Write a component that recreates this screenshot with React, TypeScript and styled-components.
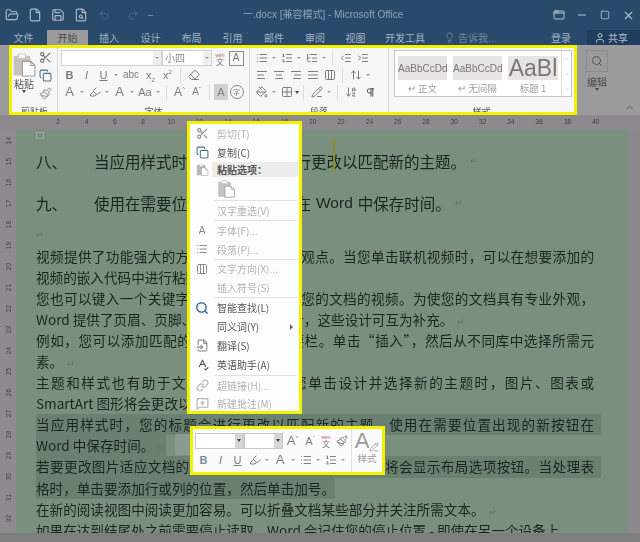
import React from "react";
import styled, { createGlobalStyle } from "styled-components";
import {
  AlignCenter, AlignJustify, AlignLeft, AlignRight, ArrowDownAZ, ArrowUpDown, ChevronDown, ChevronUp,
  Columns3, Copy, Eraser, File, FileInput, FileSearch, FolderOpen, Grid2x2, Highlighter, IndentDecrease, IndentIncrease,
  Lightbulb, Link, List, ListOrdered, ListTree, MessageSquarePlus, Minus, PaintBucket, Paintbrush, PencilLine,
  Pilcrow, Redo2, Save, Scissors, Search, Square, Undo2, User, X, AppWindow, SpellCheck,
} from "lucide-react";

const Global = createGlobalStyle`
  html, body { margin: 0; padding: 0; background: #7e7e7e; }
  body { width: 640px; height: 542px; overflow: hidden; font-family: "Noto Sans CJK SC", "Liberation Sans", sans-serif; }
  #root { width: 640px; height: 542px; }
`;

const Page = styled.div`
  position: relative; width: 640px; height: 542px; overflow: hidden; display: flex; flex-direction: column;
  filter: blur(0.35px);
`;

/* ---------- title bar ---------- */
const TitleBar = styled.header`
  height: 30px; background: #2a4a6c; display: flex; align-items: center; position: relative; color: #9fb0c2; flex: none;
`;
const Quick = styled.div<{ $x: number; $dim?: boolean }>`
  width: 23px; margin-left: ${(p) => p.$x}px; display: flex; justify-content: center; color: ${(p) => (p.$dim ? "#4f6c8a" : "#aab8c6")};
`;
const TitleText = styled.div`
  position: absolute; left: 243px; top: 7px; font-family: "Liberation Sans", "Noto Sans CJK SC", sans-serif; font-size: 10px; line-height: 16px; color: #8ea2b7; white-space: nowrap;
`;
const WindowButtons = styled.div`
  margin-left: auto; display: flex; align-items: center; gap: 9px; padding-right: 5px; color: #b4c0cc;
`;
const WindowButton = styled.span`
  width: 14px; height: 14px; display: flex; align-items: center; justify-content: center;
`;

/* ---------- tabs ---------- */
const TabBar = styled.nav`
  height: 15px; background: #2a4a6c; display: flex; font-size: 10px; line-height: 15px; color: #a3b2c2; flex: none;
`;
const Tab = styled.span<{ $w: number; $active?: boolean }>`
  width: ${(p) => p.$w}px; flex: none; text-align: center; height: 16px;
  ${(p) => (p.$active ? "background:#9b9b9b;color:#4a4a4a;" : "")}
`;
const TellMe = styled.span`
  margin-left: 10px; display: flex; align-items: center; gap: 3px; color: #6f879f;
`;
const Login = styled.span`
  margin-left: auto; width: 36px; color: #9fb0c2;
`;
const Share = styled.span`
  width: 53px; background: #1f3d5e; display: flex; align-items: center; gap: 2px; padding-left: 7px; box-sizing: border-box; color: #b5c2cf; height: 15px;
`;

/* ---------- ribbon ---------- */
const RibbonRow = styled.section`
  height: 70px; background: #9b9b9b; display: flex; flex: none; position: relative;
`;
const Ribbon = styled.div`
  margin-left: 9px; width: 568px; height: 70px; box-sizing: border-box; border: 3px solid #f2f200; background: #f6f6f6; display: flex; overflow: hidden; flex: none;
`;
const Group = styled.div<{ $w: number; $last?: boolean }>`
  width: ${(p) => p.$w}px; flex: none; box-sizing: border-box; position: relative; overflow: hidden;
  ${(p) => (p.$last ? "" : "border-right: 1px solid #d8d8d8;")}
`;
const GroupLabel = styled.div`
  position: absolute; left: 0; right: 0; top: 58px; text-align: center; font-size: 9px; line-height: 12px; color: #555;
`;
const Rows = styled.div<{ $gap?: number }>`
  display: flex; flex-direction: column; gap: ${(p) => p.$gap ?? 1}px; padding: 2px 0 0 3px;
`;
const ToolRow = styled.div`
  display: flex; align-items: center; height: 16px; color: #7c7c7c; font-size: 11px;
`;
const Tool = styled.span<{ $w?: number; $c?: string; $bg?: string }>`
  width: ${(p) => p.$w ?? 17}px; height: 16px; flex: none; display: flex; align-items: center; justify-content: center; line-height: 16px;
  color: ${(p) => p.$c ?? "#7c7c7c"}; ${(p) => (p.$bg ? `background:${p.$bg};` : "")}
`;
const Letter = styled.span<{ $size?: number; $b?: boolean; $i?: boolean; $u?: boolean }>`
  font-family: "Liberation Sans", sans-serif; font-size: ${(p) => p.$size ?? 11}px; line-height: 14px;
  font-weight: ${(p) => (p.$b ? 700 : 400)}; font-style: ${(p) => (p.$i ? "italic" : "normal")};
  text-decoration: ${(p) => (p.$u ? "underline" : "none")}; white-space: nowrap;
`;
const Sup = styled.sup`
  font-size: 6px; line-height: 0;
`;
const Sub = styled.sub`
  font-size: 6px; line-height: 0;
`;
const Caret = styled.span`
  width: 0; height: 0; border-left: 2px solid transparent; border-right: 2px solid transparent; border-top: 2px solid #9a9a9a; flex: none; margin: 0 2px;
`;
const DarkCaret = styled(Caret)`
  border-top-color: #444; border-left-width: 2.5px; border-right-width: 2.5px; border-top-width: 3px; margin: 0;
`;
const VSep = styled.span`
  width: 1px; height: 15px; background: #dcdcdc; margin: 0 4px; flex: none;
`;
const Select = styled.div<{ $w: number; $box?: string }>`
  width: ${(p) => p.$w}px; height: 16px; box-sizing: border-box; background: #fff; border: 1px solid ${(p) => p.$box ?? "#d2d2d2"}; display: flex; flex: none; font-size: 10px; color: #8a8a8a; line-height: 14px;
`;
const SelectValue = styled.span`
  flex: 1; padding-left: 2px;
`;
const SelectBtn = styled.span<{ $bg?: string }>`
  width: 8px; background: ${(p) => p.$bg ?? "#eeeeee"}; display: flex; align-items: center; justify-content: center;
`;
const BoxA = styled.span`
  width: 13px; height: 13px; border: 1px solid #8d8d8d; display: flex; align-items: center; justify-content: center; font-family: "Liberation Sans", sans-serif; font-size: 10px; color: #777;
`;
const Wen = styled.span`
  display: flex; flex-direction: column; align-items: center; font-size: 8px; line-height: 7px; color: #777;
`;
const WenTop = styled.span`
  font-size: 5px; line-height: 6px; color: #b06a5a; font-family: "Liberation Sans", sans-serif;
`;
const Circled = styled.span`
  width: 12px; height: 12px; border: 1px solid #888; border-radius: 50%; font-size: 7px; line-height: 12px; text-align: center; color: #777;
`;

const ClipBody = styled.div`
  display: flex; height: 58px;
`;
const PasteCol = styled.div`
  width: 24px; display: flex; flex-direction: column; align-items: center; font-size: 10px; line-height: 12px; padding-top: 2px; color: #555;
`;
const PasteIcon = styled.span`
  height: 28px; display: flex; align-items: center;
`;
const ClipTools = styled.div`
  display: flex; flex-direction: column; align-items: center; gap: 5px; padding-top: 3px; width: 18px; color: #6c6c6c;
`;

const StyleBox = styled.div`
  margin: 2px 0 0 5px; width: 178px; height: 47px; display: flex; box-sizing: border-box; border: 1px solid #c6c6c6; background: #fff;
`;
const Cards = styled.div`
  flex: 1; display: flex; gap: 6px; padding: 5px 0 0 3px;
`;
const Card = styled.div<{ $w: number }>`
  width: ${(p) => p.$w}px; display: flex; flex-direction: column; align-items: center;
`;
const Swatch = styled.div<{ $large?: boolean }>`
  width: 100%; height: 25px; background: #e6e3e3; overflow: hidden; white-space: nowrap; text-align: center;
  font-family: "Liberation Sans", sans-serif; color: #777; font-size: ${(p) => (p.$large ? 23 : 10)}px; line-height: 25px;
`;
const CardLabel = styled.div`
  font-size: 9.5px; line-height: 15px; color: #9c9c9c; margin-top: 1px;
`;
const Scrolls = styled.div`
  width: 9px; border-left: 1px solid #dcdcdc; display: flex; flex-direction: column; justify-content: space-around; align-items: center; color: #aaa;
`;

const EditGroup = styled.div`
  width: 30px; margin-left: 5px; display: flex; flex-direction: column; align-items: center; padding-top: 5px; font-size: 10px; line-height: 12px; color: #4a4a4a;
`;
const EditIcon = styled.span`
  width: 22px; height: 22px; box-sizing: border-box; border: 1px solid #8c8c8c; display: flex; align-items: center; justify-content: center; color: #555; margin-bottom: 4px;
`;
const Collapse = styled.span`
  position: absolute; right: 5px; bottom: 2px; color: #555; display: flex;
`;

/* ---------- ruler ---------- */
const HRuler = styled.div`
  height: 15px; background: #8d8a8e; display: flex; padding-left: 44px; font-family: "Liberation Sans", sans-serif; font-size: 6.5px; line-height: 13px; color: #3f3f3f; flex: none;
`;
const Mark = styled.span`
  width: 28.3px; flex: none; text-align: center;
`;

/* ---------- workspace ---------- */
const Workspace = styled.main`
  flex: none; height: 403px; display: flex;
`;
const VRuler = styled.div`
  width: 16px; flex: none; background: #8d8b8f; display: flex; flex-direction: column; overflow: hidden;
`;
const VMark = styled.span`
  height: 21px; flex: none; display: flex; align-items: center; justify-content: center; font-family: "Liberation Sans", sans-serif; font-size: 6.5px; color: #3f3f3f; transform: rotate(-90deg);
`;
const Doc = styled.article`
  flex: 1; background: #79907f; padding: 20px 0 0 20px; overflow: hidden; color: #1a2520; position: relative;
`;
const Scrollbar = styled.div`
  width: 12px; flex: none; background: #8b898c;
`;
const Bottom = styled.div`
  flex: 1; background: #7e7e7e;
`;
const Heading = styled.div`
  display: flex; font-size: 15.5px; line-height: 22px; height: 22px; margin-bottom: 20px; white-space: nowrap;
`;
const HeadNo = styled.span`
  width: 58px; flex: none;
`;
const Latin = styled.span`
  font-family: "Liberation Sans", sans-serif; margin: 0 5px;
`;
const ParaMark = styled.span`
  color: #5f7468; font-size: 9px; margin-left: 4px;
`;
const EmptyPara = styled.div`
  height: 21.5px; line-height: 21px; margin-top: -10px; color: #5f7468; font-size: 9px;
`;
const Line = styled.div<{ $fill?: boolean; $sel?: boolean }>`
  font-size: 13.6px; line-height: 21.1px; height: 21.1px; white-space: nowrap;
  width: ${(p) => (p.$fill ? "558px" : "fit-content")};
  ${(p) => (p.$fill ? "text-align: justify; text-align-last: justify; white-space: normal;" : "")}
  ${(p) => (p.$sel ? "background: #6a8172;" : "")}
  ${(p) => (p.$sel && p.$fill ? "box-shadow: 7px 0 0 #6a8172;" : "")}
`;
const MarginMark = styled.span`
  position: absolute; left: 20px; top: 2px; width: 6px; height: 5px; border: 1px solid #a0a8a2;
`;
const Ghost = styled.span`
  position: absolute; left: 159px; top: 304px; width: 15px; height: 21px; background: #8a9c8f;
`;
const IBeam = styled.div`
  position: absolute; left: 331px; top: 140px; width: 5px; height: 32px; color: #8f8a2a;
  border-top: 1px solid currentColor; border-bottom: 1px solid currentColor; box-sizing: border-box;
  &::before { content: ""; display: block; width: 2px; height: 100%; margin: 0 auto; background: currentColor; }
`;

/* ---------- context menu ---------- */
const Menu = styled.aside`
  position: absolute; left: 187px; top: 121px; width: 115px; height: 293px; box-sizing: border-box; border: 3px solid #f2f200; background: #fdfdfd;
`;
const MenuRow = styled.div<{ $off?: boolean; $h?: number }>`
  height: ${(p) => p.$h ?? 18.5}px; display: flex; align-items: center; font-size: 10px; color: ${(p) => (p.$off ? "#b2b2b2" : "#555")}; white-space: nowrap; position: relative;
`;
const MenuIcon = styled.span<{ $c?: string }>`
  width: 24px; margin-right: 3px; flex: none; display: flex; justify-content: center; color: ${(p) => p.$c ?? "#8a8a8a"};
`;
const MenuHeadRow = styled.div`
  display: flex; align-items: center; height: 15px;
`;
const MenuHead = styled.div`
  flex: 1; height: 15px; line-height: 15px; background: #ececec; font-size: 10px; font-weight: 700; color: #555; padding-left: 5px; margin: 0 1px 0 -5px;
`;
const PasteRow = styled.div`
  margin-left: 27px; height: 23px; display: flex; align-items: center;
`;
const MenuSep = styled.div`
  height: 1px; background: #e2e2e2; margin: 0 2px 0 24px;
`;
const SubArrow = styled.span`
  position: absolute; right: 6px; top: 6px; width: 0; height: 0; border-top: 3px solid transparent; border-bottom: 3px solid transparent; border-left: 3px solid #666;
`;

/* ---------- mini toolbar ---------- */
const Mini = styled.aside`
  position: absolute; left: 190px; top: 426px; width: 195px; height: 49px; box-sizing: border-box; border: 3px solid #f2f200; background: #fbfbfb; display: flex;
`;
const MiniMain = styled.div`
  flex: none; width: 158px; display: flex; flex-direction: column; padding: 3px 0 0 2px; box-sizing: border-box; gap: 3px;
`;
const MiniRowTop = styled.div`
  display: flex; align-items: center; height: 17px; color: #8a8a8a;
`;
const MiniRowBottom = styled.div`
  display: flex; align-items: center; height: 16px; color: #8a8a8a;
`;
const MiniStyle = styled.div`
  flex: 1; border-left: 1px solid #e0e0e0; display: flex; flex-direction: column; align-items: center; font-size: 9.5px; color: #9a9a9a; line-height: 12px;
`;
const BigA = styled.span`
  font-family: "Liberation Sans", sans-serif; font-size: 22px; line-height: 23px; color: #9a9a9a; display: flex; align-items: flex-end;
`;

const rulerMarks = ["2", "4", "6", "8", "10", "12", "14", "16", "18", "20", "22", "24", "26", "28", "30", "32", "34", "36", "38", "40"];
const vMarks = Array.from({ length: 20 }, (_, i) => String(i + 14));
const tabs: [string, number][] = [["插入", 42], ["设计", 41], ["布局", 41], ["引用", 41], ["邮件", 42], ["审阅", 40], ["视图", 41]];

function Par() { return <ParaMark>↵</ParaMark>; }

function PasteGlyph({ size, color }: { size: number; color: string }) {
  return (
    <svg width={size} height={size} viewBox="0 0 24 24" fill="none">
      <rect x="2" y="4" width="15" height="18" rx="1" fill={color} stroke={color} />
      <rect x="6" y="2" width="7" height="4" rx="1" fill="#fff" stroke={color} />
      <path d="M10 9h8l4 4v10H10z" fill="#fff" stroke="#9a9a9a" />
      <path d="M18 9v4h4" stroke="#9a9a9a" />
    </svg>
  );
}

export default function App() {
  return (
    <Page>
      <Global />
      <TitleBar>
        <Quick $x={0}><FolderOpen size={14} /></Quick>
        <Quick $x={0}><File size={14} /></Quick>
        <Quick $x={0}><Save size={14} /></Quick>
        <Quick $x={0}><FileSearch size={14} /></Quick>
        <Quick $x={0} $dim><Undo2 size={12} /></Quick>
        <Quick $x={6} $dim><Redo2 size={12} /></Quick>
        <Quick $x={-5}><Minus size={7} /></Quick>
        <TitleText>一.docx [兼容模式] - Microsoft Office</TitleText>
        <WindowButtons>
          <WindowButton><AppWindow size={12} /></WindowButton>
          <WindowButton><Minus size={12} /></WindowButton>
          <WindowButton><Square size={10} /></WindowButton>
          <WindowButton><X size={13} /></WindowButton>
        </WindowButtons>
      </TitleBar>
      <TabBar>
        <Tab $w={47}>文件</Tab>
        <Tab $w={41} $active>开始</Tab>
        {tabs.map(([t, w]) => <Tab key={t} $w={w}>{t}</Tab>)}
        <Tab $w={58}>开发工具</Tab>
        <TellMe><Lightbulb size={11} />告诉我...</TellMe>
        <Login>登录</Login>
        <Share><User size={12} />共享</Share>
      </TabBar>

      <RibbonRow>
        <Ribbon>
          <Group $w={46}>
            <ClipBody>
              <PasteCol>
                <PasteIcon><PasteGlyph size={25} color="#c9c2b8" /></PasteIcon>
                粘贴
                <DarkCaret />
              </PasteCol>
              <ClipTools>
                <Scissors size={13} />
                <Copy size={13} color="#50708f" />
                <Paintbrush size={13} color="#a9a9a9" />
              </ClipTools>
            </ClipBody>
            <GroupLabel>剪贴板</GroupLabel>
          </Group>
          <Group $w={192}>
            <Rows $gap={1}>
              <ToolRow>
                <Select $w={101}><SelectValue /><SelectBtn><Caret /></SelectBtn></Select>
                <Select $w={50}><SelectValue>小四</SelectValue><SelectBtn><Caret /></SelectBtn></Select>
                <Tool $w={16}><Wen><WenTop>wén</WenTop>文</Wen></Tool>
                <Tool $w={16}><BoxA>A</BoxA></Tool>
              </ToolRow>
              <ToolRow>
                <Tool><Letter $b>B</Letter></Tool>
                <Tool><Letter $i>I</Letter></Tool>
                <Tool><Letter $u>U</Letter></Tool>
                <Caret />
                <Tool $w={22}><Letter $size={10}>abc</Letter></Tool>
                <Tool><Letter>x<Sub>2</Sub></Letter></Tool>
                <Tool><Letter>x<Sup>2</Sup></Letter></Tool>
                <VSep />
                <Tool><Eraser size={12} /></Tool>
              </ToolRow>
              <ToolRow>
                <Tool><Letter $size={13}>A</Letter></Tool>
                <Caret />
                <Tool><Highlighter size={12} /></Tool>
                <Caret />
                <Tool><Letter $size={13}>A</Letter></Tool>
                <Caret />
                <Tool $w={18}><Letter>Aa</Letter></Tool>
                <Caret />
                <VSep />
                <Tool><Letter $size={12}>A<Sup>^</Sup></Letter></Tool>
                <Tool><Letter $size={10}>A<Sup>ˇ</Sup></Letter></Tool>
                <VSep />
                <Tool $w={14} $bg="#cfcfcf"><Letter>A</Letter></Tool>
                <Tool $w={17}><Circled>字</Circled></Tool>
              </ToolRow>
            </Rows>
            <GroupLabel>字体</GroupLabel>
          </Group>
          <Group $w={139}>
            <Rows $gap={1}>
              <ToolRow>
                <Tool><List size={12} /></Tool><Caret />
                <Tool><ListOrdered size={12} /></Tool><Caret />
                <Tool><ListTree size={12} /></Tool><Caret />
                <VSep />
                <Tool><IndentDecrease size={12} /></Tool>
                <Tool><IndentIncrease size={12} /></Tool>
              </ToolRow>
              <ToolRow>
                <Tool><AlignLeft size={12} /></Tool>
                <Tool><AlignCenter size={12} /></Tool>
                <Tool><AlignRight size={12} /></Tool>
                <Tool><AlignJustify size={12} /></Tool>
                <Tool><Columns3 size={12} /></Tool>
                <VSep />
                <Tool><ArrowUpDown size={12} /></Tool><Caret />
              </ToolRow>
              <ToolRow>
                <Tool><PaintBucket size={12} /></Tool><Caret />
                <Tool><Grid2x2 size={12} /></Tool><DarkCaret />
                <VSep />
                <Tool><PencilLine size={12} /></Tool><Caret />
                <VSep />
                <Tool><ArrowDownAZ size={12} /></Tool>
                <Tool $w={22} $c="#444"><Pilcrow size={11} /></Tool>
              </ToolRow>
            </Rows>
            <GroupLabel>段落</GroupLabel>
          </Group>
          <Group $w={185} $last>
            <StyleBox>
              <Cards>
                <Card $w={49}><Swatch>AaBbCcDd</Swatch><CardLabel>↵ 正文</CardLabel></Card>
                <Card $w={49}><Swatch>AaBbCcDd</Swatch><CardLabel>↵ 无间隔</CardLabel></Card>
                <Card $w={50}><Swatch $large>AaBl</Swatch><CardLabel>标题 1</CardLabel></Card>
              </Cards>
              <Scrolls><ChevronUp size={6} /><ChevronDown size={6} /><ChevronDown size={6} /></Scrolls>
            </StyleBox>
            <GroupLabel>样式</GroupLabel>
          </Group>
        </Ribbon>
        <EditGroup>
          <EditIcon><Search size={12} /></EditIcon>
          编辑
          <DarkCaret />
        </EditGroup>
        <Collapse><ChevronUp size={11} /></Collapse>
      </RibbonRow>

      <HRuler>{rulerMarks.map((m) => <Mark key={m}>{m}</Mark>)}</HRuler>

      <Workspace>
        <VRuler>{vMarks.map((m) => <VMark key={m}>{m}</VMark>)}</VRuler>
        <Doc>
          <MarginMark />
          <Heading><HeadNo>八、</HeadNo>当应用样式时，您的标题会进行更改以匹配新的主题。<Par /></Heading>
          <Heading><HeadNo>九、</HeadNo>使用在需要位置出现的新按钮在<Latin>Word</Latin>中保存时间。<Par /></Heading>
          <EmptyPara>↵</EmptyPara>
          <Line $fill>视频提供了功能强大的方法帮助您证明您的观点。当您单击联机视频时，可以在想要添加的</Line>
          <Line>视频的嵌入代码中进行粘贴。<Par /></Line>
          <Line $fill>您也可以键入一个关键字以联机搜索最适合您的文档的视频。为使您的文档具有专业外观，</Line>
          <Line>Word 提供了页眉、页脚、封面和文本框设计，这些设计可互为补充。<Par /></Line>
          <Line $fill>例如，您可以添加匹配的封面、页眉和提要栏。单击“插入”，然后从不同库中选择所需元</Line>
          <Line>素。<Par /></Line>
          <Line $fill>主题和样式也有助于文档保持协调。当您单击设计并选择新的主题时，图片、图表或</Line>
          <Line>SmartArt 图形将会更改以匹配新的主题。<Par /></Line>
          <Line $fill $sel>当应用样式时，您的标题会进行更改以匹配新的主题。使用在需要位置出现的新按钮在</Line>
          <Line $sel>Word 中保存时间。<Par /></Line>
          <Line $fill $sel>若要更改图片适应文档的方式，请单击该图片，图片旁边将会显示布局选项按钮。当处理表</Line>
          <Line $sel>格时，单击要添加行或列的位置，然后单击加号。</Line>
          <Line>在新的阅读视图中阅读更加容易。可以折叠文档某些部分并关注所需文本。<Par /></Line>
          <Line>如果在达到结尾处之前需要停止读取，Word 会记住您的停止位置 - 即使在另一个设备上。</Line>
          <Ghost />
        </Doc>
        <Scrollbar />
      </Workspace>
      <Bottom />

      <IBeam />

      <Menu>
        <MenuRow $off $h={19}><MenuIcon><Scissors size={13} /></MenuIcon>剪切(T)</MenuRow>
        <MenuRow $h={19}><MenuIcon $c="#50708f"><Copy size={13} /></MenuIcon>复制(C)</MenuRow>
        <MenuHeadRow>
          <MenuIcon $c="#a0a0a0"><PasteGlyph size={13} color="#b8b8b8" /></MenuIcon>
          <MenuHead>粘贴选项：</MenuHead>
        </MenuHeadRow>
        <PasteRow><PasteGlyph size={19} color="#c4c4c4" /></PasteRow>
        <MenuSep />
        <MenuRow $off $h={19}><MenuIcon />汉字重选(V)</MenuRow>
        <MenuSep />
        <MenuRow $off $h={19}><MenuIcon><Letter $size={10}>A</Letter></MenuIcon>字体(F)...</MenuRow>
        <MenuRow $off><MenuIcon><List size={12} /></MenuIcon>段落(P)...</MenuRow>
        <MenuSep />
        <MenuRow $off><MenuIcon><Columns3 size={12} /></MenuIcon>文字方向(X)...</MenuRow>
        <MenuRow $off><MenuIcon />插入符号(S)</MenuRow>
        <MenuSep />
        <MenuRow $h={20}><MenuIcon $c="#2f6aa8"><Search size={14} strokeWidth={2.4} /></MenuIcon>智能查找(L)</MenuRow>
        <MenuRow $h={18}><MenuIcon />同义词(Y)<SubArrow /></MenuRow>
        <MenuRow $h={19}><MenuIcon><FileInput size={13} /></MenuIcon>翻译(S)</MenuRow>
        <MenuRow $h={20}><MenuIcon $c="#555"><SpellCheck size={13} /></MenuIcon>英语助手(A)</MenuRow>
        <MenuSep />
        <MenuRow $off $h={19}><MenuIcon $c="#b0b0b0"><Link size={13} /></MenuIcon>超链接(H)...</MenuRow>
        <MenuRow $off $h={18}><MenuIcon $c="#b0b0b0"><MessageSquarePlus size={13} /></MenuIcon>新建批注(M)</MenuRow>
      </Menu>

      <Mini>
        <MiniMain>
          <MiniRowTop>
            <Select $w={49} $box="#c8c8c8"><SelectValue /><SelectBtn $bg="#d6d6d6"><DarkCaret /></SelectBtn></Select>
            <Select $w={39} $box="#c8c8c8"><SelectValue /><SelectBtn $bg="#d6d6d6"><DarkCaret /></SelectBtn></Select>
            <Tool $w={19}><Letter $size={13}>A<Sup>^</Sup></Letter></Tool>
            <Tool $w={16}><Letter $size={11}>A<Sup>ˇ</Sup></Letter></Tool>
            <Tool $w={16}><Wen><WenTop>wén</WenTop>文</Wen></Tool>
            <Tool $w={15}><Paintbrush size={12} /></Tool>
          </MiniRowTop>
          <MiniRowBottom>
            <Tool $c="#7c8ca0"><Letter $b>B</Letter></Tool>
            <Tool><Letter $i>I</Letter></Tool>
            <Tool><Letter $u>U</Letter></Tool>
            <Tool><Highlighter size={12} /></Tool>
            <Caret />
            <Tool $w={18}><Letter $size={13}>A</Letter></Tool>
            <Caret />
            <Tool><List size={12} /></Tool>
            <Caret />
            <Tool><ListOrdered size={12} /></Tool>
            <Caret />
          </MiniRowBottom>
        </MiniMain>
        <MiniStyle>
          <BigA>A<PencilLine size={10} /></BigA>
          样式
        </MiniStyle>
      </Mini>
    </Page>
  );
}
